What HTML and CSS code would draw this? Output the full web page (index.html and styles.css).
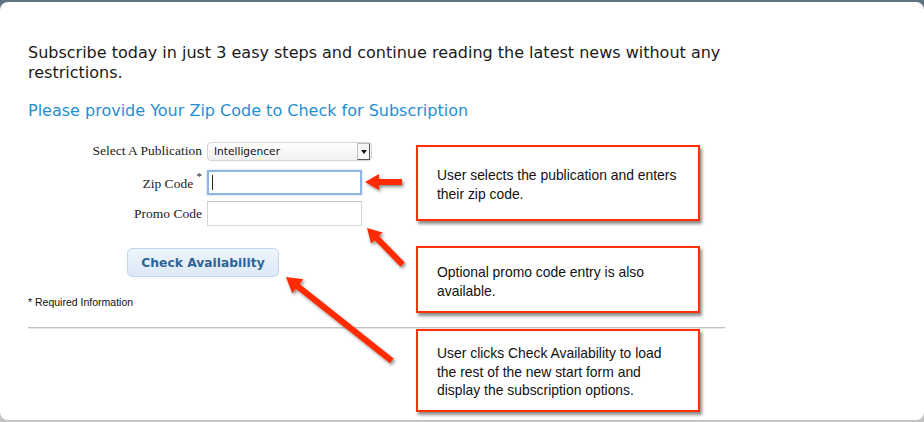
FILE: index.html
```html
<!DOCTYPE html>
<html>
<head>
    <title>Subscribe</title>
    <link rel="stylesheet" href="styles.css">
</head>
<body>
    <div class="panel">
        <p class="intro">Subscribe today in just 3 easy steps and continue reading the latest news without any restrictions.</p>
        <h2 class="step-title">Please provide Your Zip Code to Check for Subscription</h2>

        <form class="zip-form">
            <label class="field-label">Select A Publication</label>
            <div class="select-box">
                <span>Intelligencer</span>
                <span class="select-btn"></span>
            </div>

            <label class="field-label">Zip Code <sup>*</sup></label>
            <span class="zip-wrap">
                <input type="text" class="text-input focused">
                <span class="caret"></span>
            </span>

            <label class="field-label">Promo Code</label>
            <input type="text" class="text-input">
        </form>

        <button type="button" class="check-btn">Check Availability</button>

        <p class="required">* Required Information</p>
        <div class="rule"></div>

        <!-- notas de anotação por cima do formulário -->
        <div class="callouts">
            <div class="callout first">User selects the publication and enters their zip code.</div>
            <div class="callout second">Optional promo code entry is also available.</div>
            <div class="callout third">User clicks Check Availability to load the rest of the new start form and display the subscription options.</div>
        </div>

        <svg class="arrows" width="924" height="422" viewBox="0 0 924 422">
            <defs>
                <filter id="shadow" x="-20%" y="-20%" width="140%" height="140%">
                    <feDropShadow dx="1.5" dy="2" stdDeviation="1.5" flood-color="#000" flood-opacity="0.45"/>
                </filter>
            </defs>
            <g fill="#ff2c00" filter="url(#shadow)">
                <polygon transform="translate(365,182)" points="0,0 14,-8 14,-3 37,-3 37,3 14,3 14,8"/>
                <polygon transform="translate(367,228) rotate(45.8)" points="0,0 14,-8 14,-3 51,-3 51,3 14,3 14,8"/>
                <polygon transform="translate(286,277) rotate(38.4)" points="0,0 15,-9 15,-3 135,-3 135,3 15,3 15,9"/>
            </g>
        </svg>
    </div>
</body>
</html>
```

FILE: styles.css
```css
html, body {
    margin: 0;
    padding: 0;
}

body {
    width: 924px;
    height: 422px;
    overflow: hidden;
    background: linear-gradient(#5f7480 0, #5f7480 50%, #c4c4c4 50%);
}

.panel {
    position: relative;
    margin-top: 2px;
    height: 418px;
    background-color: #fff;
    border-radius: 8px;
    padding: 41px 0 0 28px;
    box-sizing: border-box;
}

.intro {
    width: 740px;
    margin: 0;
    font-family: "DejaVu Sans", Verdana, sans-serif;
    font-size: 16px;
    line-height: 20px;
    color: #1a1a1a;
}

.step-title {
    margin: 18px 0 0;
    font-family: "DejaVu Sans", Verdana, sans-serif;
    font-size: 16px;
    font-weight: normal;
    line-height: 20px;
    color: #1f8fd1;
}

.zip-form {
    display: grid;
    grid-template-columns: 174px 170px;
    grid-template-rows: 30px 32px 31px;
    column-gap: 5px;
    align-items: center;
    margin-top: 15px;
}

.field-label {
    text-align: right;
    font-family: "Liberation Serif", "Times New Roman", serif;
    font-size: 13.5px;
    color: #222;
}

.field-label sup {
    font-size: 11px;
    position: relative;
    top: -2px;
}

.select-box {
    display: flex;
    align-items: center;
    justify-content: space-between;
    width: 165px;
    height: 19px;
    box-sizing: border-box;
    padding: 0 0 0 6px;
    border: 1px solid #d4d4d4;
    border-radius: 4px;
    background: linear-gradient(#fff, #f0f0f0);
    font-family: "DejaVu Sans", Verdana, sans-serif;
    font-size: 10.6px;
    color: #111;
}

.select-btn {
    position: relative;
    width: 11px;
    height: 15px;
    margin-right: 1px;
    border: 1px solid #bdbdbd;
    border-right-color: #555;
    border-bottom-color: #555;
    background: #f7f7f7;
    border-radius: 1px;
}

.select-btn::after {
    content: "";
    position: absolute;
    left: 3px;
    top: 6px;
    border-left: 3px solid transparent;
    border-right: 3px solid transparent;
    border-top: 4px solid #111;
}

.zip-wrap {
    position: relative;
    display: inline-block;
    width: 155px;
    height: 25px;
}

.text-input {
    width: 155px;
    height: 25px;
    box-sizing: border-box;
    margin: 0;
    border: 1px solid #d6d6d6;
    border-top-color: #c4c4c4;
    background: #fff;
    outline: none;
}

.text-input.focused {
    border: 2px solid #8fb6e2;
    box-shadow: 0 0 2px #a9c9ee;
}

.caret {
    position: absolute;
    left: 5px;
    top: 5px;
    width: 1px;
    height: 15px;
    background: #222;
}

.check-btn {
    display: block;
    margin: 19px 0 0 99px;
    width: 152px;
    height: 29px;
    padding: 0;
    border: 1px solid #bfd6ec;
    border-radius: 5px;
    background: linear-gradient(#eef5fc, #dce9f6);
    font-family: "DejaVu Sans", Verdana, sans-serif;
    font-size: 12.3px;
    font-weight: bold;
    color: #2e6596;
    cursor: pointer;
}

.required {
    margin: 19px 0 0;
    font-family: "Liberation Sans", Arial, sans-serif;
    font-size: 10.5px;
    color: #111;
}

.rule {
    width: 697px;
    height: 1px;
    margin-top: 19px;
    background: #c2c2c2;
    border-bottom: 1px solid #e6e6e6;
}

.callouts {
    position: absolute;
    left: 416px;
    top: 143px;
    display: flex;
    flex-direction: column;
}

.callout {
    width: 284px;
    box-sizing: border-box;
    border: 2px solid #ff3000;
    background: #fff;
    box-shadow: 2px 3px 3px rgba(0, 0, 0, 0.45);
    font-family: "Liberation Sans", Arial, sans-serif;
    font-size: 13.9px;
    line-height: 18.5px;
    color: #111;
    padding: 19px 14px 0 19px;
}

.callout.first {
    height: 76px;
}

.callout.second {
    height: 67px;
    margin-top: 25px;
    padding-top: 15px;
}

.callout.third {
    height: 83px;
    margin-top: 16px;
    padding-top: 13px;
}

.arrows {
    position: absolute;
    left: 0;
    top: -2px;
}
```
